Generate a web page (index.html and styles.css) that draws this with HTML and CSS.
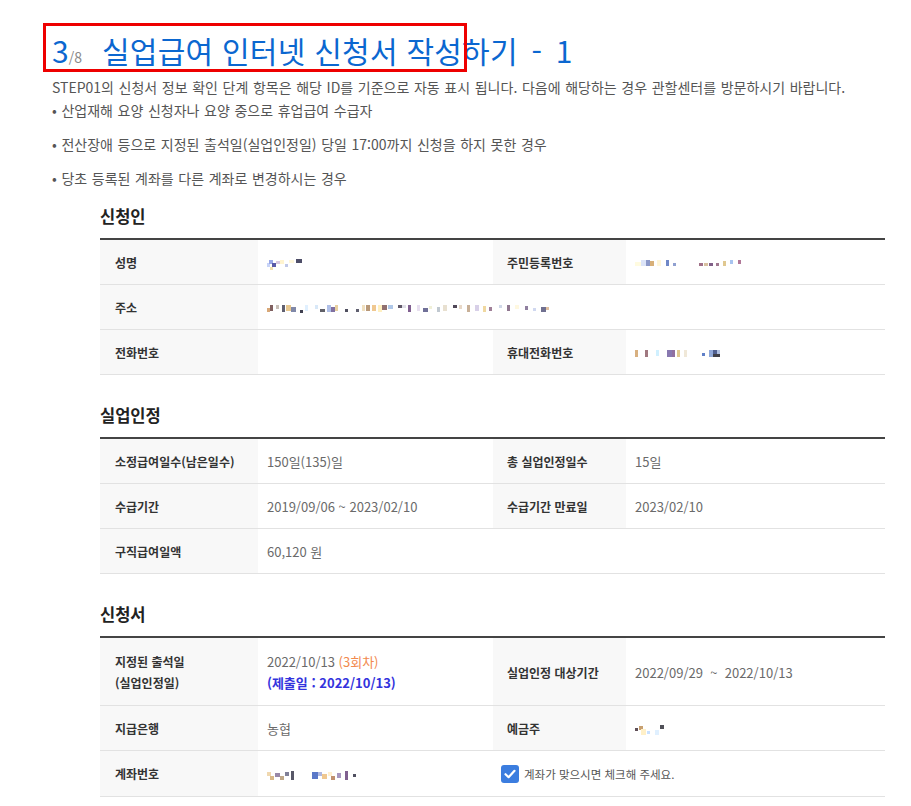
FILE: index.html
```html
<!DOCTYPE html>
<html lang="ko">
<head>
<meta charset="utf-8">
<title>실업급여 인터넷 신청서 작성하기</title>
<link rel="stylesheet" href="styles.css">
</head>
<body>
<div class="page">
  <h1 class="title"><span class="step">3</span><span class="step-total">/8</span>실업급여 인터넷 신청서 작성하기<span class="step-suffix"> - 1</span></h1>
  <div class="highlight"></div>
  <p class="intro">STEP01의 신청서 정보 확인 단계 항목은 해당 ID를 기준으로 자동 표시 됩니다. 다음에 해당하는 경우 관할센터를 방문하시기 바랍니다.</p>
  <ul class="notes">
    <li>• 산업재해 요양 신청자나 요양 중으로 휴업급여 수급자</li>
    <li>• 전산장애 등으로 지정된 출석일(실업인정일) 당일 17:00까지 신청을 하지 못한 경우</li>
    <li>• 당초 등록된 계좌를 다른 계좌로 변경하시는 경우</li>
  </ul>

  <section class="block first">
    <h2>신청인</h2>
    <table class="data">
      <colgroup><col class="c1"><col class="c2"><col class="c3"><col class="c4"></colgroup>
      <tr>
        <th>성명</th>
        <td><svg class="blur" width="36" height="12" viewBox="0 0 36 12"><rect x="0" y="5" width="3" height="4" fill="#c8d4f8"/><rect x="2" y="2" width="4" height="4" fill="#9aa8e8"/><rect x="5" y="5" width="4" height="4" fill="#5a5aa8"/><rect x="3" y="9" width="3" height="3" fill="#f0e0b0"/><rect x="9" y="3" width="4" height="3" fill="#d8c8e0"/><rect x="13" y="2" width="4" height="4" fill="#fff4d0"/><rect x="18" y="6" width="3" height="3" fill="#c0c8e8"/><rect x="22" y="2" width="5" height="3" fill="#fff8dc"/><rect x="29" y="1" width="6" height="4" fill="#4e4e68"/></svg></td>
        <th class="r">주민등록번호</th>
        <td><svg class="blur" width="112" height="10" viewBox="0 0 112 10"><rect x="0" y="3" width="6" height="4" fill="#fffbe0"/><rect x="6" y="1" width="5" height="6" fill="#dce4f8"/><rect x="11" y="1" width="4" height="6" fill="#8b98c8"/><rect x="15" y="2" width="4" height="5" fill="#d8b078"/><rect x="22" y="1" width="4" height="6" fill="#fff6d8"/><rect x="31" y="1" width="3" height="6" fill="#7088c8"/><rect x="38" y="4" width="3" height="3" fill="#90a0d0"/><rect x="64" y="4" width="4" height="3" fill="#a07088"/><rect x="69" y="4" width="4" height="3" fill="#d8c0a0"/><rect x="74" y="4" width="4" height="3" fill="#806088"/><rect x="81" y="4" width="3" height="3" fill="#a07890"/><rect x="88" y="2" width="3" height="5" fill="#e0c890"/><rect x="95" y="1" width="3" height="4" fill="#a8c4f0"/><rect x="103" y="1" width="3" height="4" fill="#b07898"/></svg></td>
      </tr>
      <tr>
        <th>주소</th>
        <td colspan="3"><svg class="blur" width="284" height="12" viewBox="0 0 284 12"><rect x="0" y="5" width="3" height="4" fill="#d8a878"/><rect x="3" y="2" width="3" height="6" fill="#806060"/><rect x="9" y="2" width="3" height="4" fill="#c8c0b8"/><rect x="15" y="2" width="3" height="7" fill="#606070"/><rect x="19" y="2" width="5" height="6" fill="#e8c890"/><rect x="24" y="4" width="5" height="5" fill="#8088a8"/><rect x="33" y="7" width="3" height="3" fill="#404050"/><rect x="38" y="2" width="3" height="6" fill="#e0f0ff"/><rect x="48" y="2" width="3" height="4" fill="#d8e8f8"/><rect x="53" y="6" width="5" height="3" fill="#606068"/><rect x="60" y="2" width="4" height="7" fill="#b0c0e8"/><rect x="64" y="4" width="4" height="5" fill="#8070a0"/><rect x="68" y="2" width="3" height="6" fill="#e8d0a0"/><rect x="78" y="6" width="3" height="3" fill="#505060"/><rect x="89" y="6" width="3" height="3" fill="#606070"/><rect x="95" y="2" width="3" height="6" fill="#f0e0c0"/><rect x="99" y="2" width="4" height="6" fill="#b89878"/><rect x="105" y="2" width="4" height="6" fill="#f0c890"/><rect x="111" y="2" width="4" height="7" fill="#fff0c0"/><rect x="115" y="2" width="5" height="5" fill="#907070"/><rect x="121" y="2" width="5" height="4" fill="#b0c8e8"/><rect x="131" y="2" width="4" height="3" fill="#605868"/><rect x="135" y="2" width="4" height="3" fill="#e0e0e8"/><rect x="141" y="2" width="3" height="7" fill="#806090"/><rect x="150" y="2" width="3" height="6" fill="#e8e0f0"/><rect x="156" y="5" width="5" height="4" fill="#707098"/><rect x="162" y="3" width="3" height="3" fill="#f0f0d8"/><rect x="170" y="4" width="3" height="5" fill="#c0c8d0"/><rect x="176" y="2" width="4" height="6" fill="#e8e0d0"/><rect x="186" y="2" width="4" height="3" fill="#504858"/><rect x="192" y="2" width="3" height="4" fill="#e8d8c8"/><rect x="200" y="2" width="3" height="7" fill="#c8b098"/><rect x="208" y="2" width="4" height="6" fill="#d8d0e8"/><rect x="216" y="3" width="3" height="6" fill="#f0d8a0"/><rect x="222" y="4" width="3" height="4" fill="#a08098"/><rect x="232" y="2" width="3" height="3" fill="#d0d8e8"/><rect x="240" y="2" width="3" height="6" fill="#907890"/><rect x="248" y="2" width="4" height="4" fill="#fff8e0"/><rect x="258" y="3" width="3" height="4" fill="#9080a0"/><rect x="266" y="5" width="3" height="3" fill="#d0d8f0"/><rect x="274" y="4" width="5" height="5" fill="#707090"/><rect x="279" y="4" width="3" height="3" fill="#e0c0a0"/></svg></td>
      </tr>
      <tr>
        <th>전화번호</th>
        <td></td>
        <th class="r">휴대전화번호</th>
        <td><svg class="blur" width="92" height="10" viewBox="0 0 92 10"><rect x="0" y="1" width="3" height="7" fill="#d8b080"/><rect x="10" y="1" width="3" height="7" fill="#a07880"/><rect x="21" y="1" width="3" height="6" fill="#d0f0ff"/><rect x="32" y="1" width="5" height="7" fill="#8878b0"/><rect x="37" y="1" width="3" height="7" fill="#9070a0"/><rect x="42" y="1" width="3" height="7" fill="#e0c890"/><rect x="49" y="1" width="3" height="7" fill="#f0e8d8"/><rect x="67" y="4" width="3" height="3" fill="#6080c8"/><rect x="74" y="1" width="4" height="7" fill="#90a8d8"/><rect x="78" y="1" width="4" height="4" fill="#506090"/><rect x="78" y="5" width="7" height="3" fill="#404048"/><rect x="82" y="1" width="3" height="4" fill="#b0c0e0"/></svg></td>
      </tr>
    </table>
  </section>

  <section class="block">
    <h2>실업인정</h2>
    <table class="data">
      <colgroup><col class="c1"><col class="c2"><col class="c3"><col class="c4"></colgroup>
      <tr>
        <th>소정급여일수(남은일수)</th>
        <td>150일(135)일</td>
        <th class="r">총 실업인정일수</th>
        <td>15일</td>
      </tr>
      <tr>
        <th>수급기간</th>
        <td>2019/09/06 ~ 2023/02/10</td>
        <th class="r">수급기간 만료일</th>
        <td>2023/02/10</td>
      </tr>
      <tr>
        <th>구직급여일액</th>
        <td colspan="3">60,120 원</td>
      </tr>
    </table>
  </section>

  <section class="block">
    <h2>신청서</h2>
    <table class="data">
      <colgroup><col class="c1"><col class="c2"><col class="c3"><col class="c4"></colgroup>
      <tr class="tall">
        <th>지정된 출석일<br>(실업인정일)</th>
        <td>2022/10/13 <span class="round">(3회차)</span><br><span class="submit">(제출일 : 2022/10/13)</span></td>
        <th class="r">실업인정 대상기간</th>
        <td>2022/09/29 &nbsp;~&nbsp; 2022/10/13</td>
      </tr>
      <tr>
        <th>지급은행</th>
        <td>농협</td>
        <th class="r">예금주</th>
        <td><svg class="blur" width="36" height="12" viewBox="0 0 36 12"><rect x="0" y="4" width="3" height="3" fill="#605058"/><rect x="4" y="2" width="4" height="4" fill="#c8a070"/><rect x="6" y="5" width="5" height="6" fill="#fff0c8"/><rect x="12" y="7" width="3" height="3" fill="#c8e0ff"/><rect x="20" y="6" width="4" height="5" fill="#e0f0ff"/><rect x="25" y="1" width="4" height="4" fill="#505058"/></svg></td>
      </tr>
      <tr>
        <th>계좌번호</th>
        <td><svg class="blur" width="98" height="12" viewBox="0 0 98 12"><rect x="0" y="2" width="4" height="4" fill="#f0d8b0"/><rect x="3" y="6" width="4" height="4" fill="#d8b888"/><rect x="8" y="3" width="5" height="4" fill="#9888a8"/><rect x="13" y="6" width="4" height="4" fill="#c0a888"/><rect x="18" y="2" width="4" height="4" fill="#808098"/><rect x="24" y="1" width="3" height="9" fill="#585868"/><rect x="45" y="2" width="6" height="7" fill="#5a78c8"/><rect x="51" y="2" width="4" height="4" fill="#b0b8e0"/><rect x="55" y="4" width="5" height="5" fill="#f0c890"/><rect x="61" y="2" width="4" height="4" fill="#fff0d0"/><rect x="64" y="6" width="4" height="4" fill="#c09070"/><rect x="70" y="3" width="4" height="5" fill="#a898c0"/><rect x="78" y="1" width="3" height="9" fill="#806090"/><rect x="86" y="4" width="3" height="3" fill="#505060"/></svg></td>
        <td colspan="2" class="confirm">
          <label class="check"><span class="box"><svg width="12" height="10" viewBox="0 0 12 10"><path d="M1.5 5.2 L4.6 8.2 L10.5 1.8" fill="none" stroke="#fff" stroke-width="2.2" stroke-linecap="round" stroke-linejoin="round"/></svg></span>계좌가 맞으시면 체크해 주세요.</label>
        </td>
      </tr>
    </table>
  </section>
</div>
</body>
</html>
```
FILE: styles.css
```css
html, body {
  margin: 0;
  padding: 0;
  background: #ffffff;
}

body {
  font-family: "Noto Sans CJK KR", "Noto Sans", sans-serif;
  color: #555;
}

.page {
  position: relative;
  padding: 30px 20px 0 52px;
}

.title {
  margin: 0;
  font-size: 30px;
  line-height: 40px;
  height: 40px;
  font-weight: 400;
  color: #0b67d0;
  letter-spacing: 0.25px;
}

.step {
  color: #0b67d0;
  letter-spacing: 0;
}

.step-total {
  font-size: 14px;
  line-height: 1;
  color: #8a8a8a;
  letter-spacing: 0;
  margin-right: 20px;
}

.step-suffix {
  word-spacing: 5px;
}

.highlight {
  position: absolute;
  left: 43px;
  top: 23px;
  width: 418px;
  height: 43px;
  border: 3px solid #ee0000;
}

.intro {
  margin: 6px 0 0;
  font-size: 14px;
  line-height: 23px;
  word-spacing: 0.7px;
  color: #555;
}

.notes {
  list-style: none;
  margin: 0;
  padding: 0;
  display: flex;
  flex-direction: column;
  gap: 11px;
}

.notes li {
  font-size: 14px;
  line-height: 23px;
  word-spacing: 0.7px;
  color: #555;
}

.block {
  margin: 28px 0 0 48px;
}

.block.first {
  margin-top: 14px;
}

.block h2 {
  margin: 0 0 10px;
  font-size: 16.5px;
  line-height: 24px;
  font-weight: 700;
  color: #222;
}

.data {
  width: 785px;
  table-layout: fixed;
  border-collapse: collapse;
  border-top: 2px solid #444;
}

.c1 { width: 158px; }
.c2 { width: 235px; }
.c3 { width: 133px; }
.c4 { width: 259px; }

.data th,
.data td {
  padding: 12px 9px 11px;
  line-height: 21px;
  border-bottom: 1px solid #e2e2e2;
  vertical-align: middle;
  text-align: left;
}

.data th {
  background: #f8f8f8;
  font-size: 12px;
  font-weight: 700;
  color: #333;
  padding-left: 15px;
}

.data th.r {
  padding-left: 14px;
}

.data td {
  font-size: 13px;
  color: #6a6a6a;
}

.data tr.tall th,
.data tr.tall td {
  padding-top: 13px;
  padding-bottom: 12px;
}

.round {
  color: #f28a4e;
}

.submit {
  color: #3333dd;
  font-weight: 700;
}

.blur {
  display: inline-block;
  vertical-align: middle;
}

.data td.confirm {
  padding-left: 8px;
}

.check {
  display: inline-flex;
  align-items: center;
  gap: 5px;
  font-size: 11.5px;
  color: #555;
}

.box {
  width: 18px;
  height: 18px;
  border-radius: 3px;
  background: #3b7ddf;
  display: inline-flex;
  align-items: center;
  justify-content: center;
}
```
